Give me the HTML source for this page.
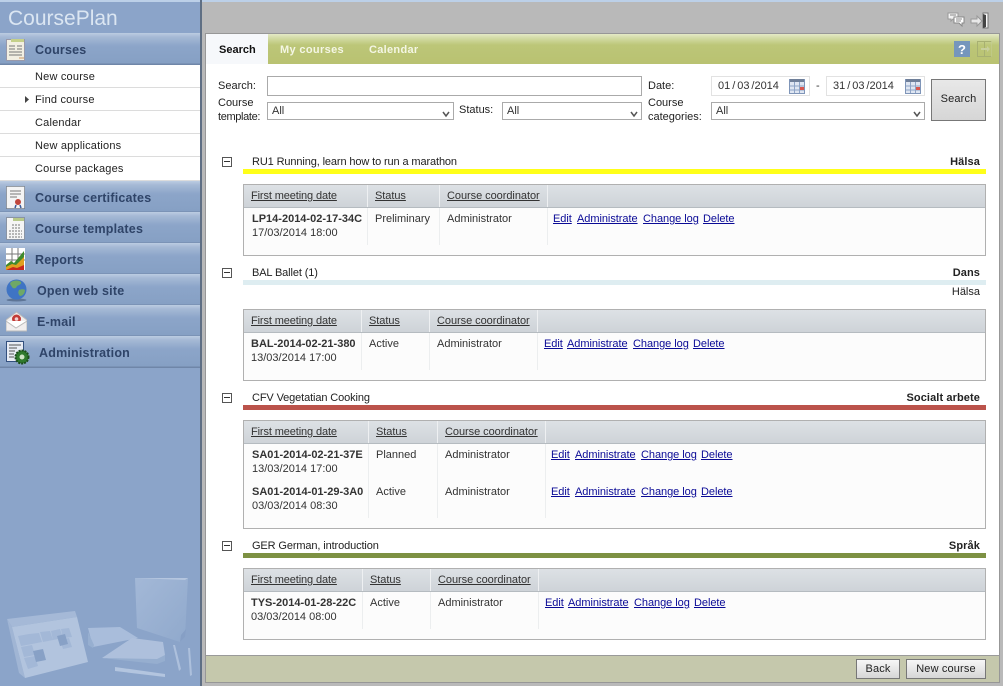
<!DOCTYPE html>
<html><head><meta charset="utf-8"><style>
html,body{margin:0;padding:0}
body{width:1003px;height:686px;overflow:hidden;position:relative;background:#fff;font:11px/14px "Liberation Sans",Arial,sans-serif;color:#333}
div,a,span.a,svg{position:absolute;white-space:nowrap}
a{color:#0a0a96;text-decoration:underline;letter-spacing:-.05px}
.nh{left:0;width:200px;height:31px;background:linear-gradient(#bccde2 0,#a5b9d5 4px,#8ca5c9 13px,#86a0c4 30px,#6f86a8 31px)}
.nt{font:bold 12.5px/16px "Liberation Sans",sans-serif;color:#2f4468;top:9px;letter-spacing:.2px}
.si{left:0;width:200px;height:23px;background:#fff;border-bottom:1px solid #dcdcdc;box-sizing:border-box}
.si div{left:35px;top:5px;color:#222;letter-spacing:.2px}
.box{left:222px;width:8px;height:8px;border:1px solid #555;background:#fff}
.box:after{content:"";position:absolute;left:1px;top:3px;width:6px;height:1px;background:#333}
.gt{left:252px;color:#222;letter-spacing:-.12px}
.cat{right:23px;font-weight:bold;color:#222;letter-spacing:.1px}
.bar{left:243px;width:743px;height:5px}
.tb{left:243px;width:741px;border:1px solid #b0b0b0;background:#fcfcfc}
.th{left:0;top:0;width:741px;height:22px;background:linear-gradient(#dde1e5,#ced3d8);border-bottom:1px solid #b5bbc0}
.th a,.th div{top:4px;color:#333}
.th .sh{width:1px;top:0;height:22px;background:#eef0f2}
.sp{width:1px;background:#eceeef}
.in{border:1px solid #aaa;background:#fff;box-sizing:border-box}
.l{color:#222}
.v{position:absolute;right:3px;bottom:1px;width:8px;height:8px}
.dt{border:1px solid #e2e2e2;background:#fff;box-sizing:border-box;height:20px;top:76px;word-spacing:-1.1px}
.btn{border:1px solid #777;background:linear-gradient(#f7f7f7,#d6d6d6);box-sizing:border-box;text-align:center;color:#222;letter-spacing:.15px}
</style></head><body>

<!-- Sidebar -->
<div style="left:0;top:0;width:200px;height:686px;background:#8ba4c9"></div>
<div style="left:0;top:0;width:1003px;height:2px;background:#bcd0e8"></div>
<div style="left:8px;top:5px;font:21px/27px 'Liberation Sans',sans-serif;color:#dbe6f2;letter-spacing:0">CoursePlan</div>

<div class="nh" style="top:33px;height:32px"><div class="nt" style="left:35px">Courses</div>
<svg style="left:6px;top:6px" width="19" height="22" viewBox="0 0 19 22"><rect x=".5" y=".5" width="18" height="21" fill="#f2efe2" stroke="#99a"/><rect x="5" y="0" width="13" height="3" fill="#c5d08a"/><path d="M3 7h6M11 7h5M3 10h6M11 10h5M3 13h13M3 16h13" stroke="#777"/><path d="M13 19h5" stroke="#c96"/></svg></div>
<div class="si" style="top:65px"><div>New course</div></div>
<div class="si" style="top:88px"><div>Find course</div>
<svg style="left:25px;top:8px" width="4" height="7"><path d="M0 0l4 3.5-4 3.5z" fill="#444"/></svg></div>
<div class="si" style="top:111px"><div>Calendar</div></div>
<div class="si" style="top:134px"><div>New applications</div></div>
<div class="si" style="top:157px;height:24px"><div>Course packages</div></div>

<div class="nh" style="top:181px"><div class="nt" style="left:35px">Course certificates</div>
<svg style="left:6px;top:5px" width="19" height="23" viewBox="0 0 19 23"><rect x=".5" y=".5" width="18" height="22" fill="#f4f4f4" stroke="#666" stroke-dasharray="1 1"/><path d="M4 5h11M4 8h11M4 11h7" stroke="#777"/><circle cx="12" cy="16" r="3" fill="#c0463c"/><path d="M10 19l-1 3M14 19l1 3" stroke="#3a5a9a" stroke-width="1.5"/></svg></div>
<div class="nh" style="top:212px"><div class="nt" style="left:35px">Course templates</div>
<svg style="left:6px;top:5px" width="19" height="23" viewBox="0 0 19 23"><rect x=".5" y=".5" width="18" height="22" fill="#f5f5f5" stroke="#8a94a4"/><rect x="7" y="1" width="11" height="3" fill="#b7c98a"/><path d="M6 8h8M6 11h8M3 14h13M3 17h13M3 20h13" stroke="#777" stroke-dasharray="2 1"/></svg></div>
<div class="nh" style="top:243px"><div class="nt" style="left:35px">Reports</div>
<svg style="left:6px;top:5px" width="19" height="23" viewBox="0 0 19 23"><rect x="0" y="0" width="19" height="22" fill="#fff"/><path d="M6 0v22M12 0v22M0 6h19M0 12h19" stroke="#777"/><path d="M0 22V17l5-4 3 2 5-6 5-6v19z" fill="#3f8a2e"/><path d="M0 22v-3l6-3 4 1 5-5 3-3v13z" fill="#e0a020"/><path d="M0 22l7-3 4 1 7-3v5z" fill="#c8281e"/></svg></div>
<div class="nh" style="top:274px"><div class="nt" style="left:37px">Open web site</div>
<svg style="left:6px;top:5px" width="21" height="23" viewBox="0 0 21 23"><ellipse cx="10.500" cy="21" rx="10" ry="1.500" fill="#5e7596"/><circle cx="10.500" cy="10.500" r="10" fill="#3f74c4"/><path d="M5 3c3-2 8-2 10 0 1 2-2 3-4 4-1 3-4 3-5 1-1-2-3-3-1-5zM13 11c2-1 5-1 6 0 0 4-3 6-5 6-2-2-2-4-1-6z" fill="#6fa866"/></svg></div>
<div class="nh" style="top:305px"><div class="nt" style="left:37px">E-mail</div>
<svg style="left:6px;top:6px" width="21" height="21" viewBox="0 0 21 21"><path d="M0 9L10.500 1 21 9v11H0z" fill="#f1eeee" stroke="#b9b9b9"/><circle cx="10.500" cy="8" r="4.500" fill="#c23b36"/><circle cx="10.500" cy="8" r="1.800" fill="#f0d0d0"/><path d="M0 10l10 7 11-7" fill="#fff" stroke="#bbb"/></svg></div>
<div class="nh" style="top:336px;height:32px"><div class="nt" style="left:39px">Administration</div>
<svg style="left:6px;top:5px" width="24" height="24" viewBox="0 0 24 24"><rect x=".5" y=".5" width="17" height="20" fill="#e8ecf4" stroke="#33507e"/><path d="M3 4h12M3 7h8M3 10h6M3 13h5M3 16h5" stroke="#555"/><circle cx="16" cy="16" r="6.500" fill="#2f7a2d" stroke="#1c4d1c" stroke-width="2" stroke-dasharray="2 1"/><circle cx="16" cy="16" r="2.500" fill="#cfe3c6"/></svg></div>

<!-- sidebar art -->
<svg style="left:0;top:540px" width="200" height="146" viewBox="0 0 200 146">
<defs><linearGradient id="bk" x1="0" y1="0" x2="1" y2="1"><stop offset="0" stop-color="#a3b8d7"/><stop offset="1" stop-color="#90a9cc"/></linearGradient></defs>
<path d="M135 38h53l-3 59-5 5-43-14z" fill="url(#bk)"/><path d="M135 38l50 2 3-2z" fill="#b5c6df"/><path d="M180 102l5-5 1-8-5 6z" fill="#869fc5"/>
<path d="M7 79l68-8 2 6-65 10z" fill="#a5b9d7"/><path d="M7 79l5 8 13 51-6-5z" fill="#a0b5d4"/>
<path d="M12 87l65-10 11 45-63 16z" fill="#b2c4de"/>
<g fill="#a3b8d7"><path d="M18 96l11-2 3 10-11 2zM29 94l10-1 3 9-10 2zM40 92l10-1 3 9-10 2zM51 91l9-2 3 9-10 2zM61 89l8-1 3 9-9 1zM21 107l11-2 3 10-11 2zM60 100l9-2 3 9-9 2zM24 118l11-2 3 10-10 3z"/></g>
<path d="M57 96l8-2 3 10-8 2z" fill="#88a1c6"/><path d="M33 111l10-2 3 11-10 2z" fill="#88a1c6"/>
<path d="M88 88l32-1 18 11-45 9z" fill="#a9bddb"/><path d="M88 92v13l5 3 1-3z" fill="#97afd0"/>
<path d="M102 118l30-20 31 4 2 13-8 8z" fill="#aec0dc"/><path d="M102 118l55 1 8-4v6l-8 3z" fill="#96aecf"/>
<path d="M115 127l50 7v3l-50-6z" fill="#b3c5df"/><path d="M173 105l2 0 6 24-2 2zM188 108l2 0 2 27-2 1z" fill="#adc0dc"/>
</svg>
<!-- Main frame -->
<div style="left:202px;top:2px;width:801px;height:684px;background:#b9b9b9"></div>
<div style="left:200px;top:0;width:2px;height:686px;background:#5f6f84"></div>
<div style="left:205px;top:33px;width:795px;height:650px;background:#fff;border:1px solid #979797;box-sizing:border-box"></div>
<div style="left:206px;top:34px;width:793px;height:30px;background:linear-gradient(#e4e9c6 0,#d3dba6 4px,#bcc678 11px,#b9c271 30px)"></div>
<div style="left:206px;top:34px;width:62px;height:30px;background:#f6f8fb"></div>
<div style="left:219px;top:43px;font-weight:bold;color:#111">Search</div>
<div style="left:280px;top:43px;font-weight:bold;color:#f4f6e4;letter-spacing:.35px">My courses</div>
<div style="left:369px;top:43px;font-weight:bold;color:#f4f6e4;letter-spacing:.3px">Calendar</div>

<!-- Top icons -->
<svg style="left:947px;top:12px" width="18" height="15" viewBox="0 0 18 15"><path d="M1 1h10v6H6l-2 2V7H1z" fill="#f2f2f2" stroke="#999"/><path d="M7 5h10v6h-2v3l-3-3H7z" fill="#fff" stroke="#888"/><path d="M3 3h6M9 7h6M9 9h5" stroke="#888"/></svg>
<svg style="left:970px;top:12px" width="20" height="18" viewBox="0 0 20 18"><path d="M1 7h6V4l5 5-5 5v-3H1z" fill="#e8e8e8" stroke="#999"/><path d="M13 1h5v15h-5z" fill="#f7f7f7" stroke="#777"/><path d="M13 2l3 1v12l-3 1z" fill="#444"/></svg>
<svg style="left:954px;top:41px" width="16" height="16"><rect width="16" height="16" fill="#7596bc"/><text x="4" y="13" font-family="Liberation Sans" font-weight="bold" font-size="13" fill="#fff">?</text></svg>
<svg style="left:977px;top:41px" width="16" height="16" viewBox="0 0 16 16"><path d="M.5.500h7v15h-7zM7.500.500h7M7.500 15.500h7" fill="none" stroke="#a7b072"/><path d="M14.500.500v15" stroke="#c6cd98" stroke-dasharray="1 1"/><path d="M4 7h6V5l3 3-3 3V9H4z" fill="#c8cf9d"/></svg>

<!-- Search form -->
<div class="l" style="left:218px;top:79px">Search:</div>
<div class="in" style="left:267px;top:76px;width:375px;height:20px"></div>
<div class="l" style="left:218px;top:96px">Course</div>
<div class="l" style="left:218px;top:110px;letter-spacing:-.35px">template:</div>
<div class="in" style="left:267px;top:102px;width:187px;height:18px"><div style="left:4px;top:1px">All</div><svg class="v" viewBox="0 0 8 8"><path d="M1 2l3 4 3-4" fill="none" stroke="#555" stroke-width="1.500"/></svg></div>
<div class="l" style="left:459px;top:103px">Status:</div>
<div class="in" style="left:502px;top:102px;width:140px;height:18px"><div style="left:4px;top:1px">All</div><svg class="v" viewBox="0 0 8 8"><path d="M1 2l3 4 3-4" fill="none" stroke="#555" stroke-width="1.500"/></svg></div>
<div class="l" style="left:648px;top:79px">Date:</div>
<div class="l" style="left:648px;top:96px">Course</div>
<div class="l" style="left:648px;top:110px">categories:</div>
<div class="dt" style="left:711px;width:99px"><div style="left:6px;top:2px">01 / 03 /2014</div><svg style="left:77px;top:2px" width="16" height="15" viewBox="0 0 16 15"><rect x=".5" y=".5" width="15" height="14" fill="#dfe6f2" stroke="#7f95b8"/><rect x="1" y="0" width="14" height="3" fill="#6f7f99"/><path d="M5.500 3v11M10.500 3v11M1 7h14M1 11h14" stroke="#8ea4c6"/><rect x="11" y="8" width="4" height="3" fill="#d9574f"/></svg></div>
<div style="left:816px;top:79px">-</div>
<div class="dt" style="left:826px;width:99px"><div style="left:6px;top:2px">31 / 03 /2014</div><svg style="left:78px;top:2px" width="16" height="15" viewBox="0 0 16 15"><rect x=".5" y=".5" width="15" height="14" fill="#dfe6f2" stroke="#7f95b8"/><rect x="1" y="0" width="14" height="3" fill="#6f7f99"/><path d="M5.500 3v11M10.500 3v11M1 7h14M1 11h14" stroke="#8ea4c6"/><rect x="11" y="8" width="4" height="3" fill="#d9574f"/></svg></div>
<div class="in" style="left:711px;top:102px;width:214px;height:18px"><div style="left:4px;top:1px">All</div><svg class="v" viewBox="0 0 8 8"><path d="M1 2l3 4 3-4" fill="none" stroke="#555" stroke-width="1.500"/></svg></div>
<div class="btn" style="left:931px;top:79px;width:55px;height:42px;line-height:38px;background:linear-gradient(#e8e8e8,#d6d6d6)">Search</div>

<!-- Group 1 -->
<div class="box" style="top:157px"></div>
<div class="gt" style="top:155px">RU1 Running, learn how to run a marathon</div>
<div class="cat" style="top:155px">Hälsa</div>
<div class="bar" style="top:169px;background:#ffff19"></div>
<div class="tb" style="top:184px;height:70px">
<div class="th"><a style="left:7px;letter-spacing:-.12px">First meeting date</a><a style="left:131px;color:#333">Status</a><a style="left:203px;color:#333">Course coordinator</a><div class="sh" style="left:123px"></div><div class="sh" style="left:195px"></div><div class="sh" style="left:303px"></div></div>
<div class="sp" style="left:123px;top:23px;height:37px"></div><div class="sp" style="left:195px;top:23px;height:37px"></div><div class="sp" style="left:303px;top:23px;height:37px"></div>
<div style="left:8px;top:27px;font-weight:bold">LP14-2014-02-17-34C</div><div style="left:8px;top:41px">17/03/2014 18:00</div>
<div style="left:131px;top:27px">Preliminary</div><div style="left:203px;top:27px">Administrator</div>
<a style="left:309px;top:27px">Edit</a><a style="left:333px;top:27px">Administrate</a><a style="left:399px;top:27px">Change log</a><a style="left:459px;top:27px">Delete</a>
</div>

<!-- Group 2 -->
<div class="box" style="top:268px"></div>
<div class="gt" style="top:266px">BAL Ballet (1)</div>
<div class="cat" style="top:266px">Dans</div>
<div class="bar" style="top:280px;background:#deedf1"></div>
<div class="cat" style="top:285px;font-weight:normal;letter-spacing:0">Hälsa</div>
<div class="tb" style="top:309px;height:70px">
<div class="th"><a style="left:7px;letter-spacing:-.12px">First meeting date</a><a style="left:125px;color:#333">Status</a><a style="left:193px;color:#333">Course coordinator</a><div class="sh" style="left:117px"></div><div class="sh" style="left:185px"></div><div class="sh" style="left:293px"></div></div>
<div class="sp" style="left:117px;top:23px;height:37px"></div><div class="sp" style="left:185px;top:23px;height:37px"></div><div class="sp" style="left:293px;top:23px;height:37px"></div>
<div style="left:7px;top:27px;font-weight:bold">BAL-2014-02-21-380</div><div style="left:7px;top:41px">13/03/2014 17:00</div>
<div style="left:125px;top:27px">Active</div><div style="left:193px;top:27px">Administrator</div>
<a style="left:300px;top:27px">Edit</a><a style="left:323px;top:27px">Administrate</a><a style="left:389px;top:27px">Change log</a><a style="left:449px;top:27px">Delete</a>
</div>

<!-- Group 3 -->
<div class="box" style="top:393px"></div>
<div class="gt" style="top:391px">CFV Vegetatian Cooking</div>
<div class="cat" style="top:391px">Socialt arbete</div>
<div class="bar" style="top:405px;background:#bb534b"></div>
<div class="tb" style="top:420px;height:107px">
<div class="th"><a style="left:7px;letter-spacing:-.12px">First meeting date</a><a style="left:132px;color:#333">Status</a><a style="left:201px;color:#333">Course coordinator</a><div class="sh" style="left:124px"></div><div class="sh" style="left:193px"></div><div class="sh" style="left:301px"></div></div>
<div class="sp" style="left:124px;top:23px;height:74px"></div><div class="sp" style="left:193px;top:23px;height:74px"></div><div class="sp" style="left:301px;top:23px;height:74px"></div>
<div style="left:8px;top:27px;font-weight:bold">SA01-2014-02-21-37E</div><div style="left:8px;top:41px">13/03/2014 17:00</div>
<div style="left:132px;top:27px">Planned</div><div style="left:201px;top:27px">Administrator</div>
<a style="left:307px;top:27px">Edit</a><a style="left:331px;top:27px">Administrate</a><a style="left:397px;top:27px">Change log</a><a style="left:457px;top:27px">Delete</a>
<div style="left:8px;top:64px;font-weight:bold">SA01-2014-01-29-3A0</div><div style="left:8px;top:78px">03/03/2014 08:30</div>
<div style="left:132px;top:64px">Active</div><div style="left:201px;top:64px">Administrator</div>
<a style="left:307px;top:64px">Edit</a><a style="left:331px;top:64px">Administrate</a><a style="left:397px;top:64px">Change log</a><a style="left:457px;top:64px">Delete</a>
</div>

<!-- Group 4 -->
<div class="box" style="top:541px"></div>
<div class="gt" style="top:539px">GER German, introduction</div>
<div class="cat" style="top:539px">Språk</div>
<div class="bar" style="top:553px;background:#7d9143"></div>
<div class="tb" style="top:568px;height:70px">
<div class="th"><a style="left:7px;letter-spacing:-.12px">First meeting date</a><a style="left:126px;color:#333">Status</a><a style="left:194px;color:#333">Course coordinator</a><div class="sh" style="left:118px"></div><div class="sh" style="left:186px"></div><div class="sh" style="left:294px"></div></div>
<div class="sp" style="left:118px;top:23px;height:37px"></div><div class="sp" style="left:186px;top:23px;height:37px"></div><div class="sp" style="left:294px;top:23px;height:37px"></div>
<div style="left:7px;top:27px;font-weight:bold">TYS-2014-01-28-22C</div><div style="left:7px;top:41px">03/03/2014 08:00</div>
<div style="left:126px;top:27px">Active</div><div style="left:194px;top:27px">Administrator</div>
<a style="left:301px;top:27px">Edit</a><a style="left:324px;top:27px">Administrate</a><a style="left:390px;top:27px">Change log</a><a style="left:450px;top:27px">Delete</a>
</div>

<!-- Footer -->
<div style="left:206px;top:655px;width:793px;height:27px;background:#c5c8ac;border-top:1px solid #9a9a9a;box-sizing:border-box"></div>
<div class="btn" style="left:856px;top:659px;width:44px;height:20px;line-height:18px">Back</div>
<div class="btn" style="left:906px;top:659px;width:80px;height:20px;line-height:18px">New course</div>
</body></html>
